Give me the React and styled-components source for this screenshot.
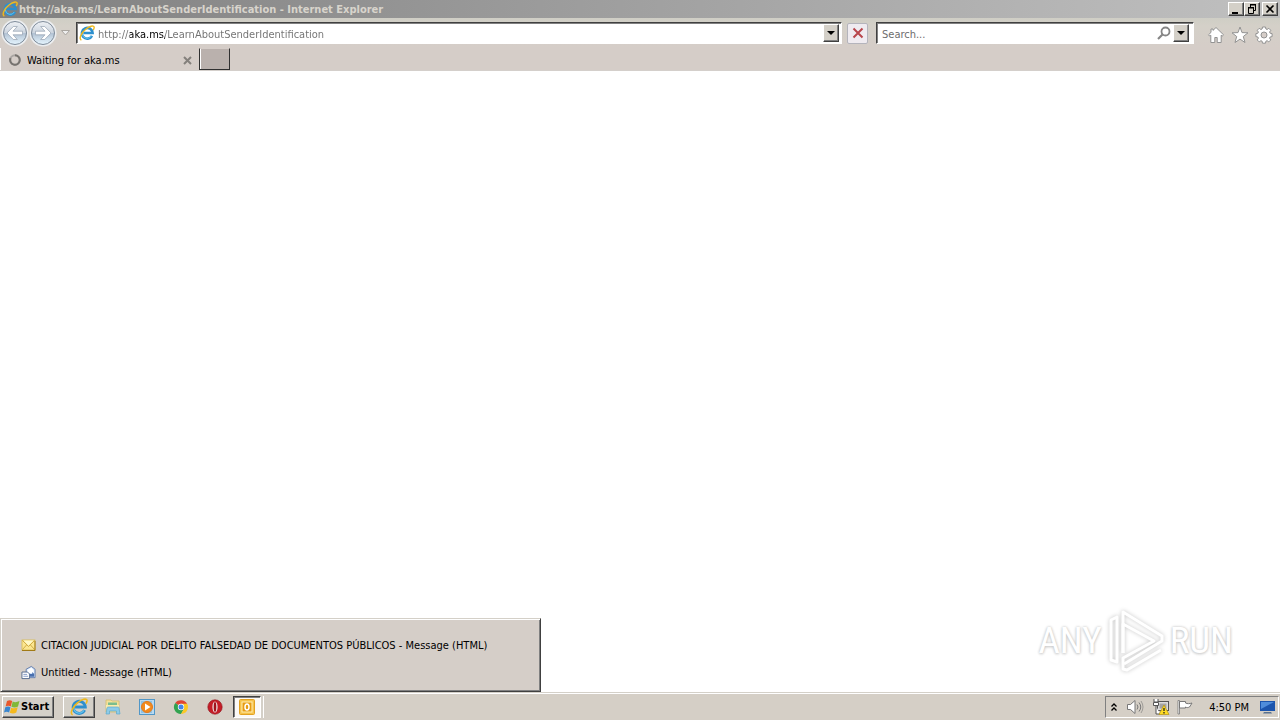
import React from "react";
import styled, { createGlobalStyle, css } from "styled-components";

const Global = createGlobalStyle`
  * { box-sizing: border-box; }
  body { margin: 0; background: #fff; }
  body, button, input { font-family: Tahoma, "DejaVu Sans Condensed", "Noto Sans", sans-serif; font-size: 11px; line-height: 14px; color: #000; }
  button { padding: 0; margin: 0; }
  svg { display: block; flex: none; }
`;

const raised = css`
  border: 1px solid;
  border-color: #fff #404040 #404040 #fff;
  box-shadow: inset -1px -1px 0 #808080;
`;

const Desktop = styled.div`
  display: flex;
  flex-direction: column;
  min-height: 100vh;
`;

const TitleBar = styled.header`
  display: flex;
  align-items: center;
  height: 18px;
  padding: 0 2px;
  gap: 1px;
  background: linear-gradient(90deg, #808080, #c0c0c0);
`;

const Title = styled.h1`
  flex: 1;
  margin: 0;
  padding-top: 1px;
  font-size: 11px;
  line-height: 14px;
  font-weight: bold;
  color: #d8d4cc;
  white-space: nowrap;
`;

const WindowButtons = styled.div`
  display: flex;
`;

const WindowButton = styled.button`
  ${raised}
  display: grid;
  place-items: center;
  width: 16px;
  height: 14px;
  margin-left: ${(p) => (p.$apart ? "2px" : "0")};
  background: #d4d0c8;
`;

const NavBar = styled.nav`
  display: flex;
  align-items: center;
  height: 30px;
  padding: 0 4px 0 1px;
  background: linear-gradient(#cfcec5, #d4d0c8 8px, #d5cdc8);
`;

const IconButton = styled.button`
  display: grid;
  place-items: center;
  width: ${(p) => p.$w || 24}px;
  height: 28px;
  border: 0;
  background: none;
`;

const ToolButton = styled(IconButton)`
  padding-top: 4px;
`;

const Field = styled.div`
  display: flex;
  align-items: center;
  height: 22px;
  padding: 0 2px;
  border: 1px solid;
  border-color: #404040 #fff #fff #404040;
  box-shadow: inset 1px 1px 0 #808080;
  background: #fff;
  min-width: 0;
`;

const AddressField = styled(Field)`
  flex: 1;
  margin-left: 3px;
`;

const SearchField = styled(Field)`
  width: 318px;
  margin: 0 10px 0 8px;
  padding-right: 4px;
`;

const TextInput = styled.input`
  flex: 1;
  min-width: 0;
  height: 18px;
  padding: 2px 3px 0;
  border: 0;
  outline: 0;
  background: none;
  color: #6d6d6d;
  &::placeholder { color: #6d6d6d; opacity: 1; }
`;

const AddressInput = styled(TextInput)`
  background: linear-gradient(90deg, #707070 35px, #000 35px, #000 70px, #707070 70px);
  background-clip: text;
  -webkit-background-clip: text;
  color: transparent;
`;

const DropButton = styled.button`
  ${raised}
  display: grid;
  place-items: center;
  width: 16px;
  height: 18px;
  background: #d4d0c8;
`;

const StopButton = styled.button`
  display: grid;
  place-items: center;
  width: 21px;
  height: 21px;
  margin-left: 5px;
  border: 1px solid #b4b4bc;
  border-radius: 2px;
  background: #efebf0;
`;

const TabBar = styled.div`
  display: flex;
  height: 23px;
  background: #d5cdc8;
  border-bottom: 1px solid #d4cfcb;
`;

const Tab = styled.div`
  display: flex;
  align-items: center;
  width: 199px;
  padding: 2px 7px 0 8px;
  gap: 6px;
  border-left: 1px solid #fff;
`;

const TabLabel = styled.span`
  flex: 1;
  padding-top: 1px;
  white-space: nowrap;
`;

const TabClose = styled.button`
  border: 0;
  background: none;
`;

const NewTab = styled.button`
  width: 31px;
  height: 22px;
  border: 1px solid;
  border-color: #d5cdc8 #303030 #303030 #303030;
  box-shadow: inset 1px 0 0 #fff;
  background: #bab1ad;
`;

const Page = styled.main`
  flex: 1;
  display: flex;
  justify-content: space-between;
  align-items: flex-end;
  background: #fff;
`;

const WindowList = styled.ul`
  display: flex;
  flex-direction: column;
  gap: 1px;
  width: 541px;
  height: 74px;
  margin: 0;
  padding: 13px 20px 7px;
  list-style: none;
  border: 1px solid;
  border-color: #d4d0c8 #404040 #404040 #d4d0c8;
  box-shadow: inset 1px 1px 0 #fff, inset -1px -1px 0 #808080;
  background: #d5cec8;
`;

const WindowItem = styled.button`
  display: flex;
  align-items: center;
  gap: 5px;
  width: 100%;
  height: 26px;
  border: 0;
  background: none;
  white-space: nowrap;
`;

const WindowLabel = styled.span`
  padding-top: 2px;
`;

const Watermark = styled.div`
  display: flex;
  align-items: center;
  gap: 5px;
  margin: 0 47px 19px 0;
  font-family: "Roboto Condensed", "Open Sans Condensed", "Noto Sans ExtraCondensed", "Noto Sans Condensed", "Liberation Sans", sans-serif;
  font-size: 37px;
  line-height: 64px;
  color: #fff;
  text-shadow: 0 0 3px #c4c4c4, 0 1px 3px #d0d0d0;
  svg { filter: drop-shadow(0 0 2px #c4c4c4); }
`;

const TaskBar = styled.footer`
  display: flex;
  align-items: center;
  height: 28px;
  padding: 1px 1px 0 2px;
  border-top: 1px solid #d4d0c8;
  box-shadow: inset 0 1px 0 #fff;
  background: #d5cfc6;
`;

const StartButton = styled.button`
  ${raised}
  display: flex;
  align-items: center;
  gap: 1px;
  width: 52px;
  height: 22px;
  padding-left: 1px;
  margin-right: 9px;
  font-weight: bold;
  background: #d4d0c8;
`;

const TaskButton = styled.button`
  display: grid;
  place-items: center;
  width: 32px;
  height: 22px;
  margin-right: 2px;
  border: 1px solid transparent;
  background: none;
  ${(p) => p.$state === "open" && css`
    ${raised}
    background: #d4d0c8;
  `}
  ${(p) => p.$state === "active" && css`
    width: 28px;
    border-color: #404040 #fff #fff #404040;
    box-shadow: inset 1px 1px 0 #808080, 2px 0 0 #d4d0c8, 3px 0 0 #fff;
    background: #fbf9f6;
  `}
`;

const Tray = styled.div`
  display: flex;
  align-items: center;
  height: 22px;
  margin-left: auto;
  padding: 0 2px;
  border: 1px solid;
  border-color: #808080 #fff #fff #808080;
`;

const TrayButton = styled.button`
  display: grid;
  place-items: center;
  width: ${(p) => p.$w || 24}px;
  height: 20px;
  border: 0;
  background: none;
`;

const Clock = styled.time`
  margin: 0 9px 0 12px;
  padding-top: 1px;
  white-space: nowrap;
`;

const IeIcon = ({ size = 16 }) => (
  <svg width={size} height={size} viewBox="0 0 16 16" fill="none">
    <path d="M13 10.8A5.400 5.400 0 1 1 13.600 8H4.500" stroke="#2d8fce" strokeWidth="2.600" />
    <path d="M12.400 10.900A4.800 4.800 0 0 1 3.400 9" stroke="#65c4ee" strokeWidth="1" />
    <path d="M2.400 15C-.6 14 2.400 7.500 7 4c3.500-2.800 7.600-4 8.100-2 .2.800-.2 2-.9 3" stroke="#efb91d" strokeWidth="1.400" />
  </svg>
);

const ArrowButtonIcon = ({ flip }) => (
  <svg width="28" height="28" viewBox="0 0 28 28">
    <defs>
      <linearGradient id={flip ? "discRight" : "discLeft"} x1="0" y1="0" x2="0" y2="1">
        <stop offset="0" stopColor="#eef1f5" />
        <stop offset=".48" stopColor="#cdd5df" />
        <stop offset=".52" stopColor="#b3c3d4" />
        <stop offset="1" stopColor="#e6f6ff" />
      </linearGradient>
    </defs>
    <circle cx="14" cy="14" r="13.500" fill="#eceef0" />
    <circle cx="14" cy="14" r="11.500" fill={`url(#${flip ? "discRight" : "discLeft"})`} stroke="#7e8b9a" />
    <path
      transform={flip ? "matrix(-1 0 0 1 28 0)" : undefined}
      d="M6 14l6.300-6.500h4L12 12.200h9.500v3.600H12l4.300 4.700h-4z"
      fill="#fff" stroke="#93a0b0" strokeWidth=".7"
    />
  </svg>
);

const Caret = () => (
  <svg width="8" height="4" viewBox="0 0 8 4"><path d="M0 0h8L4 4z" fill="#000" /></svg>
);

const HomeIcon = () => (
  <svg width="18" height="18" viewBox="0 0 18 18">
    <path d="M9 1.500l7.500 7.300-1.300 1.300-1-.9V16.500h-4v-5H7.800v5h-4V9.200l-1 .9-1.300-1.300L4 6.400V3h2v1.400z" fill="#fff" stroke="#929292" />
  </svg>
);

const StarIcon = () => (
  <svg width="18" height="18" viewBox="0 0 18 18">
    <path d="M9 1l2 5.600 6 .2-4.700 3.700L14 16.500l-5-3.400-5 3.400 1.700-6L1 6.800l6-.2z" fill="#fff" stroke="#929292" />
  </svg>
);

const GearIcon = () => (
  <svg width="18" height="18" viewBox="0 0 18 18">
    <g fill="#fff" stroke="#929292" strokeWidth="1">
      <path d="M7.500 1h3l.4 2 1.200.5 1.700-1.200 2 2-1.200 1.700.5 1.200 2 .4v3l-2 .4-.5 1.200 1.200 1.700-2 2-1.700-1.200-1.200.5-.4 2h-3l-.4-2-1.200-.5-1.700 1.200-2-2 1.200-1.700-.5-1.200-2-.4v-3l2-.4.5-1.200-1.200-1.700 2-2 1.700 1.200 1.200-.5z" />
      <circle cx="9" cy="9" r="3" fill="#d5cdc8" />
    </g>
  </svg>
);

const EnvelopeIcon = () => (
  <svg width="15" height="14" viewBox="0 0 15 14">
    <rect x="1" y="2" width="13" height="10" fill="#fbe691" stroke="#d8b94e" strokeWidth=".8" />
    <path d="M1.500 11.500L5.500 7M13.500 11.500L9.500 7M1.500 2.500l6 6 6-6" fill="none" stroke="#c79e34" strokeWidth=".8" />
    <path d="M2.500 2.500h10L7.500 7.500z" fill="#fff8c8" />
    <path d="M1 12.500h13V3" fill="none" stroke="#a17a16" />
  </svg>
);

const DraftIcon = () => (
  <svg width="15" height="15" viewBox="0 0 16 15">
    <path d="M5.500 8V4L11 1l4 3v9h-9z" fill="#d3e4fb" stroke="#5873a5" strokeWidth=".9" />
    <path d="M7 4.500L11 2.500 13.500 5v3H7z" fill="#fff" />
    <path d="M9.500 9h2.500V7l2 2v3h-4.500z" fill="#496fae" />
    <path d="M1 7h6l2 2v5H1z" fill="#fff" stroke="#52678d" />
    <path d="M2.500 9.500h4M2.500 11.500h5" stroke="#8299c5" />
  </svg>
);

const PlayMark = () => (
  <svg width="58" height="64" viewBox="0 0 58 64" fill="none" stroke="#fff" strokeWidth="3" strokeLinejoin="round">
    <path d="M16 44V3l39 24v5L17 55" />
    <path d="M10 8L4 11v40l6 2V8zM16 44V15l31 17-31 17v11l4 1 34-20" />
  </svg>
);

const WindowsFlag = () => (
  <svg width="16" height="16" viewBox="0 0 16 16">
    <path d="M3 2c2-1 3.500-1 5.200 0L6.800 7.500c-1.700-1-3.300-1-5.200 0z" fill="#e8582b" />
    <path d="M8.700 2.500c2 1 4 .8 6.800-.4L14 7.500c-2 1.200-4.400 1.200-6.600.2z" fill="#80b839" />
    <path d="M1.300 8.300c2-1 3.500-1 5.200 0L5.100 13.600c-1.600-1-3.200-1-5.100 0z" fill="#3986cf" />
    <path d="M7.200 8.700c2 1 4.300.8 6.500-.4l-1.400 5.300c-2 1.200-4.300 1.200-6.500.2z" fill="#f5b91d" />
  </svg>
);

const FolderIcon = () => (
  <svg width="18" height="18" viewBox="0 0 18 18">
    <path d="M2 2h5l1 1h7v11H2z" fill="#f4e19b" stroke="#d3bd70" strokeWidth=".8" />
    <path d="M4 4.500h9V8H4z" fill="#7abd8d" />
    <path d="M2 7h13v3.500H2z" fill="#fbecac" />
    <path d="M2 16l1-6c0-1 1-1 2-1h8c1 0 2 0 2 1l1 6h-3.500v-3h-7v3z" fill="#8dcbe8" stroke="#5dabcf" strokeWidth=".7" />
  </svg>
);

const PlayerIcon = () => (
  <svg width="18" height="18" viewBox="0 0 18 18">
    <rect x="1.500" y="1.500" width="15" height="15" fill="#b9d9f0" stroke="#5197c7" />
    <rect x="3" y="3" width="11" height="12" fill="#8fc2e3" />
    <circle cx="9" cy="9" r="5.500" fill="#f28a1d" stroke="#e57a1c" />
    <path d="M7 5.500L12.500 9 7 12.500z" fill="#fff" />
  </svg>
);

const ChromeIcon = () => (
  <svg width="16" height="16" viewBox="0 0 16 16">
    <path d="M8 8L2.200 4A7 7 0 0 1 14 4.800z" fill="#df4435" />
    <path d="M8 8L2.200 4A7 7 0 0 0 8 15l3-5.300z" fill="#32a350" />
    <path d="M8 4.800h6.200A7 7 0 0 1 8 15l3-5.300z" fill="#fbc824" />
    <circle cx="8" cy="8" r="3.200" fill="#fff" />
    <circle cx="8" cy="8" r="2.500" fill="#4385e8" />
  </svg>
);

const OperaIcon = () => (
  <svg width="16" height="16" viewBox="0 0 16 16">
    <circle cx="8" cy="8" r="7.200" fill="#c51d27" stroke="#8d1017" strokeWidth=".6" />
    <ellipse cx="8" cy="8" rx="2.600" ry="5.600" fill="#eee0e0" />
    <ellipse cx="8" cy="8" rx="1.300" ry="4.900" fill="#a0131c" />
  </svg>
);

const OutlookIcon = () => (
  <svg width="16" height="16" viewBox="0 0 16 16">
    <rect x=".5" y=".5" width="15" height="15" rx="1" fill="#f6c34a" stroke="#e2a121" />
    <rect x="3" y="3" width="10" height="10" fill="#e79c13" stroke="#fff0b6" />
    <ellipse cx="8" cy="8" rx="2" ry="3" fill="none" stroke="#fff" strokeWidth="1.500" />
  </svg>
);

const SpeakerIcon = () => (
  <svg width="18" height="16" viewBox="0 0 18 16" fill="none" stroke="#777">
    <path d="M1.500 5.500h3L9 1.500v13l-4.500-4h-3z" fill="#fff" />
    <path d="M11 5.500q2 2.500 0 5M13 3.500q3.500 4.500 0 9" />
    <path d="M15 2q4 6 0 12" strokeWidth=".6" />
  </svg>
);

const NetworkIcon = () => (
  <svg width="18" height="18" viewBox="0 0 18 18">
    <rect x="5.500" y="3.500" width="11" height="9" fill="#ddd" stroke="#555" />
    <rect x="7.500" y="5.500" width="7" height="5" fill="#a4a4a4" />
    <path d="M2 1v3h4V1M1.500 4.500h5v3h-5zM4 8v8h4" fill="#fff" stroke="#555" />
    <path d="M12 7l5 9.500H7z" fill="#ffdc22" stroke="#b59310" strokeWidth=".7" />
    <path d="M12 10v3M12 14v1.500" stroke="#222" strokeWidth="1.300" />
  </svg>
);

const FlagIcon = () => (
  <svg width="18" height="16" viewBox="0 0 18 16">
    <path d="M2 1.500h1.500V15H2z" fill="#fff" stroke="#777" strokeWidth=".8" />
    <path d="M3.500 2.500h6v1.500c2 1 4 .8 6.500 0-1 1.200-1.500 3-2.500 4-1.500.8-3 .7-4 0v1h-6z" fill="#fff" stroke="#777" />
  </svg>
);

const MonitorIcon = () => (
  <svg width="15" height="14" viewBox="0 0 15 14">
    <path d="M0 1h15v10H0z" fill="#1c55ad" />
    <path d="M1 2h13L1 9z" fill="#4f8ddb" />
    <path d="M4 12h7l1 1.500H3z" fill="#58718f" />
  </svg>
);

const windows = [
  { label: "CITACION JUDICIAL POR DELITO FALSEDAD DE DOCUMENTOS PÚBLICOS - Message (HTML)", Icon: EnvelopeIcon },
  { label: "Untitled - Message (HTML)", Icon: DraftIcon },
];

const tasks = [
  { label: "Internet Explorer", Icon: () => <IeIcon size={18} />, state: "open" },
  { label: "Windows Explorer", Icon: FolderIcon },
  { label: "Media Player", Icon: PlayerIcon },
  { label: "Chrome", Icon: ChromeIcon },
  { label: "Opera", Icon: OperaIcon },
  { label: "Outlook", Icon: OutlookIcon, state: "active" },
];

export default function App() {
  return (
    <Desktop>
      <Global />
      <TitleBar>
        <IeIcon />
        <Title>http://aka.ms/LearnAboutSenderIdentification - Internet Explorer</Title>
        <WindowButtons>
          <WindowButton aria-label="Minimize">
            <svg width="10" height="10"><path d="M1 8h6v2H1z" /></svg>
          </WindowButton>
          <WindowButton aria-label="Restore">
            <svg width="10" height="10" fill="none" stroke="#000"><path d="M3 1h6M3.500 0v3M3 .5h6M8.500 0v6.500H7M1 4h6M1 3.500h6M1.500 3v6.500h5V3" /></svg>
          </WindowButton>
          <WindowButton aria-label="Close" $apart>
            <svg width="10" height="10"><path d="M1.500 1.500l7 7M8.500 1.500l-7 7" stroke="#000" strokeWidth="1.600" /></svg>
          </WindowButton>
        </WindowButtons>
      </TitleBar>

      <NavBar>
        <IconButton $w={28} aria-label="Back"><ArrowButtonIcon /></IconButton>
        <IconButton $w={28} aria-label="Forward"><ArrowButtonIcon flip /></IconButton>
        <IconButton $w={16} aria-label="Recent pages">
          <svg width="9" height="6"><path d="M.5.500h8l-4 4.500z" fill="#eee" stroke="#aaa6a0" /></svg>
        </IconButton>
        <AddressField>
          <IeIcon />
          <AddressInput aria-label="Address" defaultValue="http://aka.ms/LearnAboutSenderIdentification" />
          <DropButton aria-label="Show addresses"><Caret /></DropButton>
        </AddressField>
        <StopButton aria-label="Stop">
          <svg width="12" height="12"><path d="M1.500 1.500l9 9M10.500 1.500l-9 9" stroke="#b8464c" strokeWidth="2" /></svg>
        </StopButton>
        <SearchField>
          <TextInput aria-label="Search" placeholder="Search..." />
          <IconButton $w={18} aria-label="Go">
            <svg width="14" height="14" fill="none" stroke="#858585"><circle cx="8.500" cy="5.500" r="4" strokeWidth="1.800" /><path d="M5.500 8.500L1 13" strokeWidth="2.200" /></svg>
          </IconButton>
          <DropButton aria-label="Search options"><Caret /></DropButton>
        </SearchField>
        <ToolButton aria-label="Home"><HomeIcon /></ToolButton>
        <ToolButton aria-label="Favorites"><StarIcon /></ToolButton>
        <ToolButton aria-label="Tools"><GearIcon /></ToolButton>
      </NavBar>

      <TabBar>
        <Tab>
          <svg width="12" height="12" fill="none"><circle cx="6" cy="6" r="4.800" stroke="#aaa6a3" strokeWidth="2" /><path d="M6 1.200a4.800 4.800 0 1 1-4.500 3" stroke="#77736f" strokeWidth="2" /></svg>
          <TabLabel>Waiting for aka.ms</TabLabel>
          <TabClose aria-label="Close tab">
            <svg width="9" height="9"><path d="M1 1l7 7M8 1L1 8" stroke="#84807c" strokeWidth="2" /></svg>
          </TabClose>
        </Tab>
        <NewTab aria-label="New tab" />
      </TabBar>

      <Page>
        <WindowList>
          {windows.map(({ label, Icon }) => (
            <li key={label}><WindowItem><Icon /><WindowLabel>{label}</WindowLabel></WindowItem></li>
          ))}
        </WindowList>
        <Watermark>
          <span>ANY</span>
          <PlayMark />
          <span>RUN</span>
        </Watermark>
      </Page>

      <TaskBar>
        <StartButton><WindowsFlag />Start</StartButton>
        {tasks.map(({ label, Icon, state }) => (
          <TaskButton key={label} aria-label={label} $state={state}><Icon /></TaskButton>
        ))}
        <Tray>
          <TrayButton $w={12} aria-label="Show hidden icons">
            <svg width="6" height="8" fill="none" stroke="#000" strokeWidth="1.300"><path d="M.5 3.500L3 1l2.500 2.500M.5 7.500L3 5l2.500 2.500" /></svg>
          </TrayButton>
          <TrayButton $w={29} aria-label="Volume"><SpeakerIcon /></TrayButton>
          <TrayButton aria-label="Network"><NetworkIcon /></TrayButton>
          <TrayButton aria-label="Action center"><FlagIcon /></TrayButton>
          <Clock>4:50 PM</Clock>
          <TrayButton $w={18} aria-label="Show desktop"><MonitorIcon /></TrayButton>
        </Tray>
      </TaskBar>
    </Desktop>
  );
}
